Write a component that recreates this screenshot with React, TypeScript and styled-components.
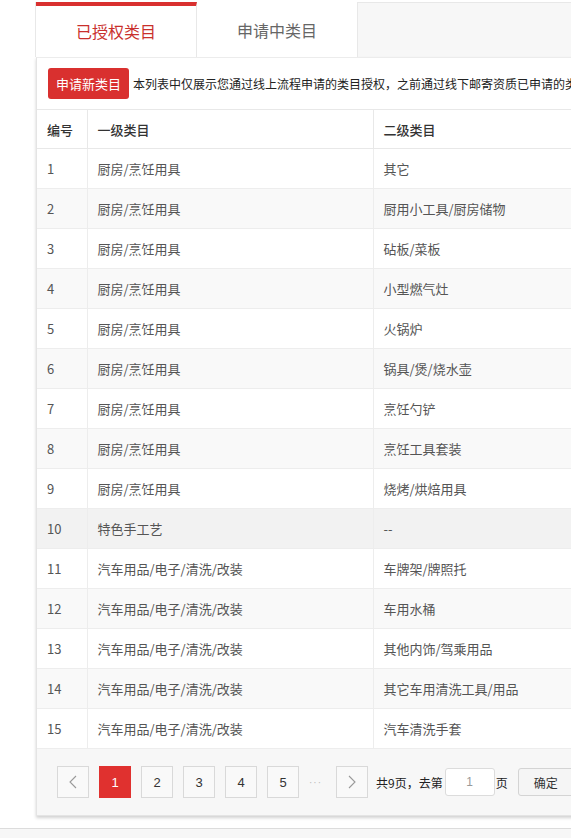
import React from "react";
import styled, { createGlobalStyle, css } from "styled-components";

const GlobalStyle = createGlobalStyle`
  html, body {
    margin: 0;
    padding: 0;
    background: #fff;
    overflow: hidden;
  }
  body {
    font-family: "Noto Sans CJK SC", "Liberation Sans", sans-serif;
    font-size: 13px;
    color: #333;
  }
  * {
    box-sizing: border-box;
  }
`;

const Page = styled.div`
  padding: 2px 0 0 35px;
`;

const Wrapper = styled.div`
  width: 860px;
`;

const TabBar = styled.div`
  display: flex;
  height: 55px;
  background: #f7f7f7;
  border-top: 1px solid #e8e8e8;
  border-left: 1px solid #e8e8e8;
`;

const Tab = styled.div<{ $active?: boolean }>`
  width: 161px;
  display: flex;
  align-items: center;
  justify-content: center;
  margin-top: -1px;
  background: #fff;
  border-right: 1px solid #e8e8e8;
  font-size: 16px;
  color: #666;
  ${({ $active }) =>
    $active &&
    css`
      color: #c9302c;
      border-top: 4px solid #d9302f;
      padding-bottom: 2px;
    `}
`;

const Panel = styled.div`
  background: #fff;
  border: 1px solid #e4e4e4;
  border-top-color: #ececec;
  box-shadow: 0 2px 3px rgba(0, 0, 0, 0.18);
  margin-left: 1px;
`;

const Toolbar = styled.div`
  display: flex;
  align-items: center;
  gap: 4px;
  padding: 10px 0 10px 11px;
  white-space: nowrap;
  font-size: 12px;
  color: #222;
`;

const PrimaryButton = styled.button`
  height: 31px;
  width: 81px;
  border: none;
  border-radius: 3px;
  background: #d9302f;
  color: #fff;
  font-family: inherit;
  font-size: 13px;
  padding: 0;
`;

const Table = styled.table`
  width: 100%;
  border-collapse: collapse;
  table-layout: fixed;
`;

const HeadCell = styled.th<{ $width?: number }>`
  width: ${({ $width }) => ($width ? `${$width}px` : "auto")};
  height: 39px;
  padding: 0 10px;
  text-align: left;
  font-weight: 500;
  font-size: 13px;
  color: #333;
  border-top: 1px solid #e8e8e8;
  border-bottom: 1px solid #e8e8e8;
  & + & {
    border-left: 1px solid #e8e8e8;
  }
`;

const Row = styled.tr<{ $tone: "plain" | "stripe" | "hover" }>`
  background: ${({ $tone }) =>
    $tone === "hover" ? "#f2f2f2" : $tone === "stripe" ? "#f9f9f9" : "#fff"};
`;

const Cell = styled.td`
  height: 40px;
  padding: 0 10px;
  font-size: 13px;
  color: #555;
  border-bottom: 1px solid #ededed;
  white-space: nowrap;
  & + & {
    border-left: 1px solid #ededed;
  }
`;

const Pager = styled.div`
  display: flex;
  align-items: center;
  height: 66px;
  padding-left: 20px;
  background: #f7f7f7;
  white-space: nowrap;
`;

const PageButton = styled.div<{ $current?: boolean }>`
  width: 32px;
  height: 32px;
  margin-right: 10px;
  display: flex;
  align-items: center;
  justify-content: center;
  border: 1px solid ${({ $current }) => ($current ? "#e0312f" : "#d9d9d9")};
  background: ${({ $current }) => ($current ? "#e0312f" : "#f9f9f9")};
  color: ${({ $current }) => ($current ? "#fff" : "#333")};
  font-family: "Liberation Sans", sans-serif;
  font-size: 13px;
`;

const Ellipsis = styled.span`
  width: 16px;
  margin-right: 11px;
  color: #bbb;
  font-size: 10px;
  letter-spacing: 1px;
  font-family: "Liberation Sans", sans-serif;
`;

const PagerText = styled.span`
  font-size: 12px;
  color: #222;
  margin-left: -2px;
`;

const PageInput = styled.input`
  width: 50px;
  height: 28px;
  margin: 0 3px 0 2px;
  border: 1px solid #dcdcdc;
  border-radius: 3px;
  background: #fff;
  text-align: center;
  color: #999;
  font-size: 12px;
  font-family: "Liberation Sans", sans-serif;
  outline: none;
`;

const ConfirmButton = styled.button`
  margin-left: 10px;
  width: 56px;
  height: 28px;
  border: 1px solid #d4d4d4;
  border-radius: 3px;
  background: #f5f5f5;
  color: #333;
  font-family: inherit;
  font-size: 12px;
  padding: 0;
`;

const Footer = styled.div`
  margin-top: 12px;
  height: 20px;
  border-top: 1px solid #dcdcdc;
  background: #f7f7f7;
`;

const Chevron = ({ dir }: { dir: "left" | "right" }) => (
  <svg width="8" height="14" viewBox="0 0 8 14" fill="none">
    <path
      d={dir === "left" ? "M7 1 L1 7 L7 13" : "M1 1 L7 7 L1 13"}
      stroke="#999"
      strokeWidth="1.1"
    />
  </svg>
);

const KITCHEN = "厨房/烹饪用具";
const CAR = "汽车用品/电子/清洗/改装";

const rows: [string, string][] = [
  [KITCHEN, "其它"],
  [KITCHEN, "厨用小工具/厨房储物"],
  [KITCHEN, "砧板/菜板"],
  [KITCHEN, "小型燃气灶"],
  [KITCHEN, "火锅炉"],
  [KITCHEN, "锅具/煲/烧水壶"],
  [KITCHEN, "烹饪勺铲"],
  [KITCHEN, "烹饪工具套装"],
  [KITCHEN, "烧烤/烘焙用具"],
  ["特色手工艺", "--"],
  [CAR, "车牌架/牌照托"],
  [CAR, "车用水桶"],
  [CAR, "其他内饰/驾乘用品"],
  [CAR, "其它车用清洗工具/用品"],
  [CAR, "汽车清洗手套"],
];

const App = () => (
  <>
    <GlobalStyle />
    <Page>
      <Wrapper>
        <TabBar>
          <Tab $active>已授权类目</Tab>
          <Tab>申请中类目</Tab>
        </TabBar>
        <Panel>
          <Toolbar>
            <PrimaryButton>申请新类目</PrimaryButton>
            本列表中仅展示您通过线上流程申请的类目授权，之前通过线下邮寄资质已申请的类目请联系客服查询
          </Toolbar>
          <Table>
            <thead>
              <tr>
                <HeadCell $width={50}>编号</HeadCell>
                <HeadCell $width={286}>一级类目</HeadCell>
                <HeadCell>二级类目</HeadCell>
              </tr>
            </thead>
            <tbody>
              {rows.map(([first, second], i) => (
                <Row
                  key={i}
                  $tone={i === 9 ? "hover" : i % 2 === 1 ? "stripe" : "plain"}
                >
                  <Cell>{i + 1}</Cell>
                  <Cell>{first}</Cell>
                  <Cell>{second}</Cell>
                </Row>
              ))}
            </tbody>
          </Table>
          <Pager>
            <PageButton>
              <Chevron dir="left" />
            </PageButton>
            <PageButton $current>1</PageButton>
            <PageButton>2</PageButton>
            <PageButton>3</PageButton>
            <PageButton>4</PageButton>
            <PageButton>5</PageButton>
            <Ellipsis>···</Ellipsis>
            <PageButton>
              <Chevron dir="right" />
            </PageButton>
            <PagerText>共9页，去第</PagerText>
            <PageInput defaultValue="1" />
            <PagerText>页</PagerText>
            <ConfirmButton>确定</ConfirmButton>
          </Pager>
        </Panel>
      </Wrapper>
    </Page>
    <Footer />
  </>
);

export default App;
